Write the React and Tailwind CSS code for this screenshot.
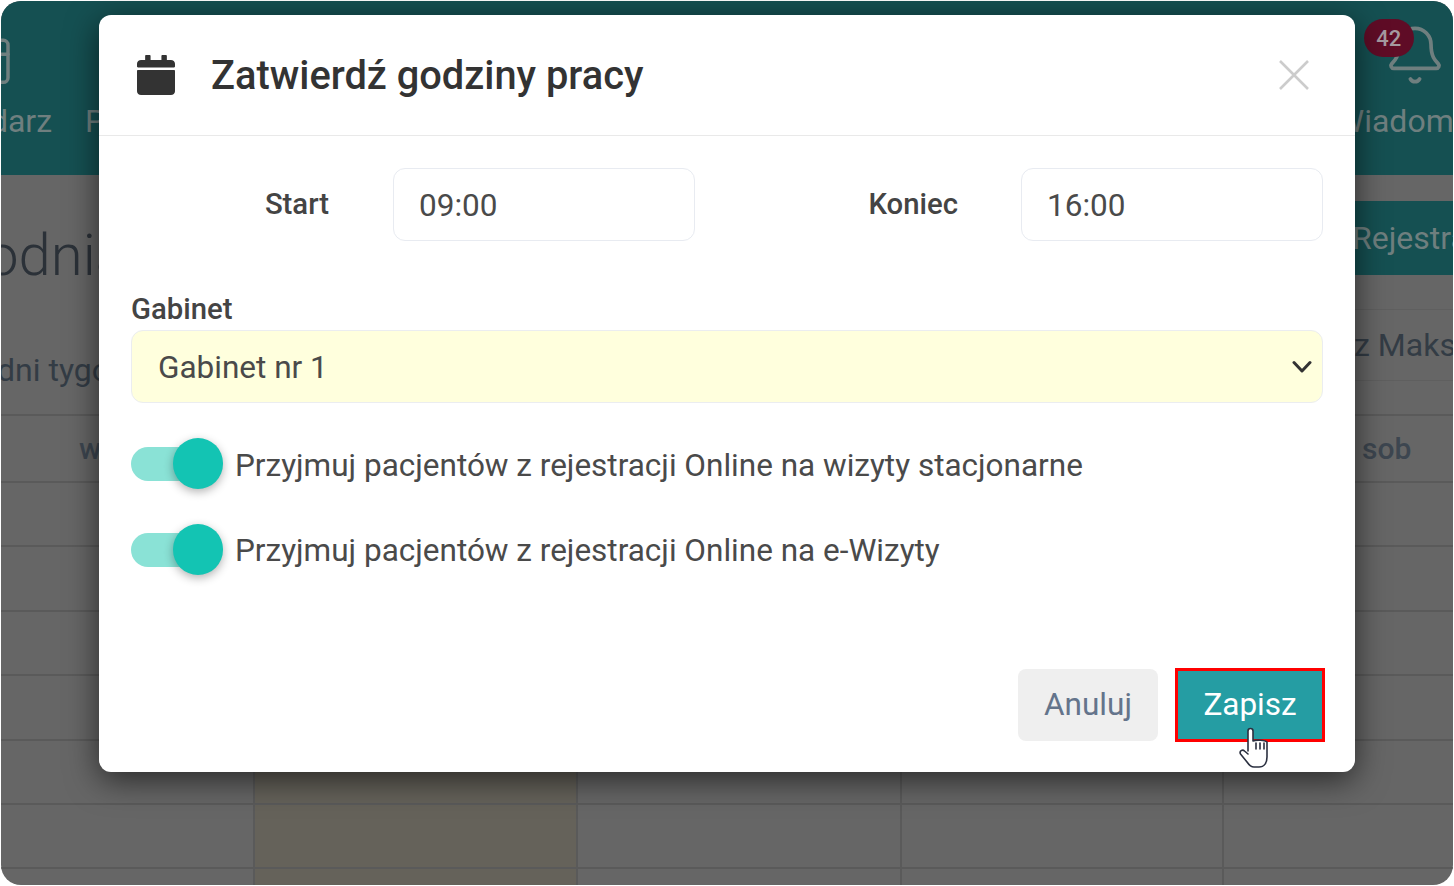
import { Bell, CalendarDays } from "lucide-react";
import { FaCalendar } from "react-icons/fa";

const ROBOTO = "font-['Roboto',sans-serif]";

const DAY_ROWS = [0, 1, 2, 3, 4, 5, 6];

const Toggle = ({ label }) => (
  <div className="flex items-center h-[51px]">
    <div className="relative w-[92px] h-[51px] shrink-0">
      <div className="absolute left-0 top-[9px] w-[70px] h-[34px] rounded-full bg-[#8ae2d6]" />
      <div className="absolute right-0 top-0 w-[50px] h-[51px] rounded-full bg-[#13c4b3] shadow-[0_3px_10px_rgba(0,0,0,0.3)]" />
    </div>
    <span className="ml-[12px] mt-[4px] text-[31.5px] leading-[40px] text-[#4a4a4a]">{label}</span>
  </div>
);

const TimeField = ({ value }) => (
  <div className="flex items-center w-[302px] h-[73px] pl-[25px] pt-[2px] rounded-[12px] border border-[#e8ebf1] text-[31.5px] text-[#4a4a4a] bg-white">
    {value}
  </div>
);

const Background = () => (
  <div className="flex flex-col h-full rounded-[20px] overflow-hidden bg-[#666666]">
    {/* top nav */}
    <div className="flex justify-between h-[174px] shrink-0 bg-[#155052] text-[32px] text-[#6f7f7f]">
      <div className="flex gap-[33px] -ml-[91px]">
        <div className="flex flex-col items-center pt-[30px]">
          <CalendarDays size={56} strokeWidth={1.5} className="ml-[12px] text-[#6f7f7f]" />
          <span className="mt-[14px] leading-[40px]">Kalendarz</span>
        </div>
        <div className="pt-[100px] leading-[40px]">Pacjenci</div>
      </div>
      <div className="relative flex flex-col items-center -mr-[60px] pt-[22px]">
        <Bell size={64} strokeWidth={1.4} className="mr-[18px] text-[#6f7f7f]" />
        <span className="mt-[14px] leading-[40px]">Wiadomości</span>
        <div className="absolute left-[28px] top-[18px] flex items-center justify-center w-[50px] h-[38px] rounded-[19px] bg-[#5f0c26] text-[22px] font-medium text-[#a59aa0]">
          42
        </div>
      </div>
    </div>

    {/* page title */}
    <div className="flex justify-between h-[241px] shrink-0 border-b-2 border-[#5a5a5a]">
      <div className="-ml-[107px] pt-[42px]">
        <div className="text-[58px] leading-[76px] font-light text-[#2b3138]">Tygodnia</div>
        <div className="mt-[57px] pl-[103px] text-[32px] leading-[40px] text-[#333c45] whitespace-nowrap">dni tygodnia</div>
      </div>
      <div className="w-[98px] shrink-0 text-[32px] whitespace-nowrap">
        <div className="mt-[26px] h-[74px] -ml-[3px] pl-0 bg-[#155052] leading-[74px] text-[#6f7f7f]">Rejestracja</div>
        <div className="mt-[34px] h-[72px] -ml-px border-y border-[#5f5f5f] leading-[70px] text-[#333c45]">z Maksymalnie</div>
      </div>
    </div>

    {/* week table */}
    <div className="flex h-[67px] shrink-0 border-b-2 border-[#5a5a5a] text-[30px] leading-[66px] font-medium text-[#3d4650]">
      <div className="w-[1361px] pl-[78px]">wt</div>
      <div>sob</div>
    </div>
    {DAY_ROWS.map((row) => (
      <div
        key={row}
        className="grid grid-cols-[254px_323px_324px_322px_1fr] h-[64.4px] shrink-0 border-b-2 border-[#5a5a5a]"
      >
        <div className="border-r-2 border-[#5a5a5a]" />
        <div className="border-r-2 border-[#5a5a5a] bg-[#65625a]" />
        <div className="border-r-2 border-[#5a5a5a]" />
        <div className="border-r-2 border-[#5a5a5a]" />
        <div />
      </div>
    ))}
  </div>
);

const HandCursor = () => (
  <svg
    className="absolute left-[1140px] top-[712px]"
    width="30"
    height="42"
    viewBox="0 0 30 42"
    fill="#fff"
    stroke="#2b3040"
    strokeWidth="1.6"
    strokeLinejoin="round"
    strokeLinecap="round"
  >
    <path d="M9 24V4a2.5 2.5 0 0 1 5 0V14c3-1.5 12-1 14 1V30c0 6-3 10-8 10h-5c-3 0-5-2-7-5L1.5 27c-1.5-3 2-5 4-3L9 27" />
    <path d="M17 16v6M21 16v6M25 16v6" />
  </svg>
);

const Modal = () => (
  <div className="absolute left-[99px] top-[15px] flex flex-col w-[1256px] h-[757px] rounded-[12px] bg-white shadow-[0_8px_32px_rgba(0,0,0,0.6)]">
    {/* header */}
    <div className="flex items-center h-[121px] shrink-0 pl-[38px] pr-[45px] border-b border-[#e9e9e9]">
      <FaCalendar preserveAspectRatio="none" className="w-[38px] h-[40px] text-[#333333]" />
      <h2 className="ml-[36px] mt-px text-[39.8px] font-medium text-[#333333]">Zatwierdź godziny pracy</h2>
      <svg className="ml-auto" width="32" height="32" viewBox="0 0 32 32" stroke="#cccccc" strokeWidth="2.6">
        <path d="M2 2L30 30M30 2L2 30" />
      </svg>
    </div>

    {/* form */}
    <div className="px-[32px] pt-[32px]">
      <div className="flex items-center">
        <label className="w-[198px] text-right text-[29.3px] font-medium text-[#444444]">Start</label>
        <div className="ml-[64px]">
          <TimeField value="09:00" />
        </div>
        <label className="w-[263px] text-right text-[29.3px] font-medium text-[#444444]">Koniec</label>
        <div className="ml-[63px]">
          <TimeField value="16:00" />
        </div>
      </div>

      <label className="block mt-[52px] text-[29.3px] leading-[32px] font-medium text-[#444444]">Gabinet</label>
      <div className="flex items-center justify-between h-[73px] mt-[5px] pl-[26px] pr-[10px] rounded-[12px] border border-[#ebedf0] bg-[#ffffdd] text-[31.5px] text-[#4a4a4a]">
        <span className="mt-[2px]">Gabinet nr 1</span>
        <svg width="20" height="14" viewBox="0 0 20 14" fill="none" stroke="#333333" strokeWidth="3" strokeLinecap="round" strokeLinejoin="round">
          <path d="M2 2.5L10 11L18 2.5" />
        </svg>
      </div>

      <div className="mt-[35px] flex flex-col gap-[34.5px]">
        <Toggle label="Przyjmuj pacjentów z rejestracji Online na wizyty stacjonarne" />
        <Toggle label="Przyjmuj pacjentów z rejestracji Online na e-Wizyty" />
      </div>
    </div>

    {/* footer */}
    <div className="flex items-center justify-end gap-[17px] mt-auto pr-[30px] pb-[30px]">
      <button className="w-[140px] h-[72px] rounded-[8px] bg-[#efefef] text-[31.5px] text-[#64748b]">Anuluj</button>
      <button className="w-[150px] h-[74px] border-[3px] border-[#ff0000] bg-[#259da3] text-[31.5px] text-white">Zapisz</button>
    </div>
    <HandCursor />
  </div>
);

const App = () => {
  return (
    <div className={`relative w-[1454px] h-[886px] p-px overflow-hidden bg-white ${ROBOTO}`}>
      <Background />
      <Modal />
    </div>
  );
};

export default App;
